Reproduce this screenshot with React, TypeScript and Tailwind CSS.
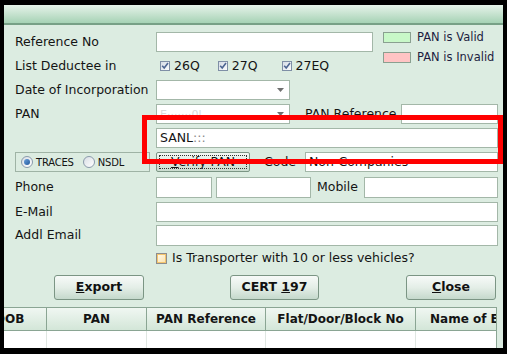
import type { ReactNode } from "react";

function Box({ className = "", children }: { className?: string; children?: ReactNode }) {
  return (
    <div
      className={`h-[20px] shrink-0 border border-[#a3b7a8] bg-white flex items-center px-[3px] overflow-hidden whitespace-nowrap ${className}`}
    >
      {children}
    </div>
  );
}

function Select({ className = "", children }: { className?: string; children?: ReactNode }) {
  return (
    <div className={`h-[20px] shrink-0 border border-[#a3b7a8] bg-white flex items-center pl-[3px] ${className}`}>
      <span className="flex-1 overflow-hidden whitespace-nowrap">{children}</span>
      <svg width="7" height="4" viewBox="0 0 7 4" className="mr-[5px]">
        <path d="M0 0h7L3.5 4z" fill="#707070" />
      </svg>
    </div>
  );
}

function Check({ warm = false }: { warm?: boolean }) {
  if (warm) {
    return (
      <span className="w-[11px] h-[11px] shrink-0 border border-[#8d8d8d] bg-[#f3c46d] flex items-center justify-center">
        <span className="w-[7px] h-[7px] bg-linear-to-br from-[#fff8e8] to-[#fbe3b0]" />
      </span>
    );
  }
  return (
    <span className="w-[10px] h-[10px] shrink-0 border border-[#7f8fa6] bg-linear-to-br from-[#d5dce6] to-[#fbfcfd] flex items-center justify-center">
      <svg width="8" height="8" viewBox="0 0 8 8">
        <path d="M1.2 3.8l2 2.2 3.8-5" stroke="#4d6592" strokeWidth="1.6" fill="none" />
      </svg>
    </span>
  );
}

function Radio({ on = false }: { on?: boolean }) {
  return (
    <span className="w-[12px] h-[12px] shrink-0 rounded-full border border-[#8a9aab] bg-linear-to-br from-[#d9dee5] to-white flex items-center justify-center">
      {on && <span className="w-[6px] h-[6px] rounded-full bg-linear-to-br from-[#6aa0dc] to-[#245a9c]" />}
    </span>
  );
}

function Btn({ className = "", children }: { className?: string; children?: ReactNode }) {
  return (
    <div
      className={`h-[25px] shrink-0 rounded-[3px] border border-[#7b9584] bg-linear-to-b from-[#f7faf8] via-[#e4eee7] to-[#c5d9cc] flex items-center justify-center font-bold text-[12.5px] text-[#111] ${className}`}
    >
      {children}
    </div>
  );
}

function Row({ label, className = "", children }: { label?: string; className?: string; children?: ReactNode }) {
  return (
    <div className={`flex items-center h-[20px] ${className}`}>
      <span className="w-[141px] shrink-0 whitespace-nowrap">{label}</span>
      {children}
    </div>
  );
}

export default function App() {
  return (
    <div className="w-[507px] h-[354px] bg-black pt-[5px] pl-[4px] pr-[4px] pb-[6px] font-['DejaVu_Sans',sans-serif] text-[12.5px] text-[#141414]">
      <div className="relative h-full flex flex-col bg-[#dcece1] overflow-hidden">
        {/* title bar */}
        <div className="h-[20px] shrink-0 bg-linear-to-b from-[#e6f3ea] to-[#a6d2b5] border-b-2 border-[#77a086]" />

        <div className="pl-[11px] pr-[5px] flex flex-col">
          {/* reference + legend */}
          <div className="flex mt-[7px]">
            <div className="flex flex-col">
              <Row label="Reference No">
                <Box className="w-[217px]" />
              </Row>
              <Row label="List Deductee in" className="mt-[4px]">
                <div className="flex items-center pl-[4px]">
                  <Check />
                  <span className="ml-[4px]">26Q</span>
                  <span className="ml-[18px] flex items-center">
                    <Check />
                    <span className="ml-[4px]">27Q</span>
                  </span>
                  <span className="ml-[24px] flex items-center">
                    <Check />
                    <span className="ml-[4px]">27EQ</span>
                  </span>
                </div>
              </Row>
            </div>
            <div className="ml-[10px] flex flex-col text-[11.5px] text-[#1d1d40]">
              <div className="flex items-center h-[11px]">
                <span className="w-[28px] h-[11px] border border-[#8aa090] bg-[#c8f8c8]" />
                <span className="ml-[6px]">PAN is Valid</span>
              </div>
              <div className="flex items-center h-[11px] mt-[9px]">
                <span className="w-[28px] h-[11px] border border-[#8aa090] bg-[#ffc4c4]" />
                <span className="ml-[6px]">PAN is Invalid</span>
              </div>
            </div>
          </div>

          <Row label="Date of Incorporation" className="mt-[4px]">
            <Select className="w-[134px]" />
          </Row>

          <Row label="PAN" className="mt-[4px]">
            <Select className="w-[134px]">
              <span className="text-[#dadada] text-[11px]">E·······0l</span>
            </Select>
            <span className="ml-[15px] w-[96px] shrink-0 whitespace-nowrap">PAN Reference</span>
            <Box className="w-[97px]" />
          </Row>

          <Row className="mt-[4px]">
            <Box className="w-[342px] bg-[#e7f5ec]">
              <span>SANL</span>
              <span className="text-[#8a8a8a]">:::</span>
            </Box>
          </Row>

          <div className="flex items-center h-[20px] mt-[4px]">
            <div className="w-[135px] h-[20px] shrink-0 border border-[#9fb3a5] flex items-center pl-[5px] text-[10px] tracking-[-0.2px]">
              <Radio on />
              <span className="ml-[3px]">TRACES</span>
              <span className="ml-[9px]">
                <Radio />
              </span>
              <span className="ml-[3px]">NSDL</span>
            </div>
            <div className="ml-[6px] w-[94px] h-[20px] shrink-0 rounded-[2px] border border-[#7b9584] bg-linear-to-b from-[#f3f8f4] to-[#cadccf] p-[2px]">
              <div className="w-full h-full border border-dotted border-[#333] flex items-center justify-center">
                <span>
                  <span className="underline">V</span>erify PAN
                </span>
              </div>
            </div>
            <span className="ml-[14px] w-[41px] shrink-0">Code</span>
            <Box className="w-[193px]">Non-Companies</Box>
          </div>

          <Row label="Phone" className="mt-[5px] h-[21px]">
            <Box className="w-[56px] h-[21px]" />
            <Box className="ml-[4px] w-[95px] h-[21px]" />
            <span className="ml-[6px] w-[47px] shrink-0">Mobile</span>
            <Box className="w-[134px] h-[21px]" />
          </Row>

          <Row label="E-Mail" className="mt-[4px]">
            <Box className="w-[342px]" />
          </Row>

          <Row label="Addl Email" className="mt-[3px] h-[21px]">
            <Box className="w-[342px] h-[21px]" />
          </Row>

          <div className="flex items-center h-[16px] mt-[4px] pl-[141px]">
            <Check warm />
            <span className="ml-[5px] whitespace-nowrap">Is Transporter with 10 or less vehicles?</span>
          </div>

          <div className="flex items-center mt-[9px]">
            <Btn className="ml-[39px] w-[90px]">
              <span>
                <span className="underline">E</span>xport
              </span>
            </Btn>
            <Btn className="ml-[86px] w-[89px]">
              <span>
                CERT <span className="underline">1</span>97
              </span>
            </Btn>
            <Btn className="ml-[87px] w-[90px]">
              <span>
                <span className="underline">C</span>lose
              </span>
            </Btn>
          </div>
        </div>

        {/* grid */}
        <div className="mt-[7px] w-[493px] flex-1 flex flex-col border-r border-[#8aa593] bg-white overflow-hidden text-[12px] font-bold">
          <div className="flex h-[24px] shrink-0 border-y border-[#8aa593] bg-linear-to-b from-[#f0f7f2] to-[#d3e6d8]">
            <div className="w-[43px] shrink-0 border-r border-[#8aa593] overflow-hidden flex items-center">
              <span className="ml-[-9px] whitespace-nowrap">DOB</span>
            </div>
            <div className="w-[100px] shrink-0 border-r border-[#8aa593] flex items-center justify-center">PAN</div>
            <div className="w-[119px] shrink-0 border-r border-[#8aa593] flex items-center justify-center whitespace-nowrap">
              PAN Reference
            </div>
            <div className="w-[150px] shrink-0 border-r border-[#8aa593] flex items-center justify-center whitespace-nowrap">
              Flat/Door/Block No
            </div>
            <div className="flex-1 overflow-hidden flex items-center pl-[14px] whitespace-nowrap">Name of Employee</div>
          </div>
          <div className="flex flex-1">
            <div className="w-[43px] shrink-0 border-r border-[#dfe6e1]" />
            <div className="w-[100px] shrink-0 border-r border-[#dfe6e1]" />
            <div className="w-[119px] shrink-0 border-r border-[#dfe6e1]" />
            <div className="w-[150px] shrink-0 border-r border-[#dfe6e1]" />
            <div className="flex-1" />
          </div>
        </div>

        {/* red highlight */}
        <div className="absolute left-[138px] top-[110px] w-[361px] h-[49px] border-[5px] border-[#ff0000]" />
      </div>
    </div>
  );
}
